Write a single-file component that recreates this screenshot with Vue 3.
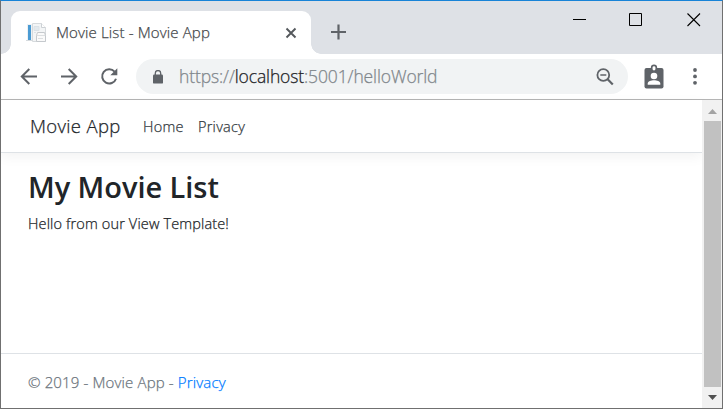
<script setup>
const nav = ['Home', 'Privacy']
</script>

<template>
  <div class="window">
    <header class="tabstrip">
      <div class="tab">
        <svg class="favicon" width="21" height="21" viewBox="0 0 21 21">
          <rect x="1" y="2" width="14" height="17" fill="#edf1f4" />
          <path d="M0 18.500h9" stroke="#d5dade" />
          <rect x="2" y="3" width="3" height="15" fill="#4a9bd3" />
          <path d="M6.500 1.500h9l4 4v14h-13z" fill="#f3f5f6" stroke="#d6dadd" />
          <path d="M15.500 1.500v4h4" fill="#fff" stroke="#ccd1d5" />
          <path d="M8 4.500h5v4H8zM8 10.500h2" fill="#e3e9ed" stroke="#dbe2e7" />
          <path d="M11.500 10.500h7l1 3v6h-9v-6z" fill="#fafafa" stroke="#c5c9cd" />
          <path d="M11 13.500h8M12 16.500h5" stroke="#dcdfe1" />
        </svg>
        <span class="tab-title">Movie List - Movie App</span>
        <svg class="tab-close" width="12" height="12" viewBox="0 0 12 12">
          <path d="M1.500 1.500l9 9M10.500 1.500l-9 9" stroke="#54585c" stroke-width="1.900" />
        </svg>
      </div>
      <svg class="plus" width="16" height="16" viewBox="0 0 16 16">
        <path d="M7.500 .5v15M0 8h15" stroke="#5f6368" stroke-width="2.200" />
      </svg>
      <div class="controls">
        <svg width="14" height="14" viewBox="0 0 14 14"><path d="M0 6.500h13" stroke="#000" /></svg>
        <svg class="maximize" width="14" height="14" viewBox="0 0 14 14"><path d="M.5.5h12v12H.5z" fill="none" stroke="#000" /></svg>
        <svg width="14" height="14" viewBox="0 0 14 14"><path d="M.5.5l12.500 12.500M13 .5L.5 13" stroke="#000" stroke-width="1.100" /></svg>
      </div>
    </header>

    <div class="toolbar">
      <svg class="nav-icon" width="18" height="18" viewBox="0 0 18 18">
        <path d="M17 8.500H2M9.300 1L1.800 8.500l7.500 7.500" />
      </svg>
      <svg class="nav-icon" width="18" height="18" viewBox="0 0 18 18">
        <path d="M1 8.500h15M8.700 1L16.200 8.500l-7.500 7.500" />
      </svg>
      <svg class="nav-icon" width="18" height="18" viewBox="0 0 18 18">
        <path d="M14.600 3.700A7.100 7.100 0 1 0 16 10.700" />
        <path d="M17.300.3v7h-7z" class="solid" />
      </svg>
      <div class="omnibox">
        <svg class="lock" width="10" height="14" viewBox="0 0 10 14">
          <rect y="4.600" width="10" height="9" rx="1.200" fill="#5f6368" />
          <path d="M2.300 5V3.200a2.700 2.700 0 0 1 5.400 0V5" fill="none" stroke="#5f6368" stroke-width="1.300" />
        </svg>
        <span class="url">https://<b>localhost</b>:5001/helloWorld</span>
        <svg class="zoom" width="18" height="18" viewBox="0 0 18 18" fill="none" stroke="#5f6368">
          <circle cx="7.300" cy="7" r="5.900" stroke-width="1.800" />
          <path d="M4.300 7h6" stroke-width="1.500" />
          <path d="M11.600 11.300l5.200 5.200" stroke-width="2.200" />
        </svg>
      </div>
      <svg class="badge" width="20" height="25" viewBox="0 0 20 25">
        <rect x=".5" y="4" width="19" height="20.500" rx="2" fill="#5f6368" />
        <rect x="7.700" y="1.300" width="4.600" height="6" rx="2.300" fill="#fff" stroke="#5f6368" stroke-width="1.700" />
        <circle cx="10" cy="12" r="3.300" fill="#fff" />
        <path d="M3.700 20.800v-1.300c0-2.200 3.500-3.200 6.300-3.200s6.300 1 6.300 3.200v1.300z" fill="#fff" />
      </svg>
      <svg class="dots" width="4" height="17" viewBox="0 0 4 17" fill="#5f6368">
        <circle cx="2" cy="2" r="1.900" /><circle cx="2" cy="8.400" r="1.900" /><circle cx="2" cy="14.800" r="1.900" />
      </svg>
    </div>

    <div class="viewport">
      <div class="page">
        <nav class="navbar">
          <a class="brand">Movie App</a>
          <a v-for="item in nav" :key="item" class="link">{{ item }}</a>
        </nav>
        <main>
          <h2>My Movie List</h2>
          <p>Hello from our View Template!</p>
        </main>
        <footer>© 2019 - Movie App - <a>Privacy</a></footer>
      </div>
      <div class="scrollbar">
        <svg width="9" height="5" viewBox="0 0 9 5"><path d="M4.500 0L9 5H0z" fill="#a3a3a3" /></svg>
        <div class="thumb"></div>
        <svg width="9" height="5" viewBox="0 0 9 5"><path d="M4.500 5L9 0H0z" fill="#505050" /></svg>
      </div>
    </div>
  </div>
</template>

<style>
body { margin: 0; background: #fff; }
</style>

<style scoped>
* { box-sizing: border-box; }
.window {
  width: 723px; height: 409px; display: flex; flex-direction: column;
  border: 1px solid #707070; border-top-color: #1883d7; background: #fff;
  font-family: "Open Sans", "Noto Sans", sans-serif; font-weight: 300; letter-spacing: .14px;
  -webkit-text-stroke: .25px currentColor; white-space: nowrap; overflow: hidden;
}
svg { flex: none; display: block; }
.tabstrip { height: 53px; flex: none; background: #dee1e6; display: flex; padding-left: 10px; }
.tab {
  width: 300px; height: 43px; margin-top: 10px; padding-left: 15px; background: #fff;
  border-radius: 9px 9px 0 0; display: flex; align-items: center; position: relative;
}
.tab::before, .tab::after { content: ""; position: absolute; bottom: 0; width: 10px; height: 10px; }
.tab::before { left: -10px; background: radial-gradient(circle at 0 0, #dee1e6 9.500px, #fff 10px); }
.tab::after { right: -10px; background: radial-gradient(circle at 100% 0, #dee1e6 9.500px, #fff 10px); }
.tab-title { width: 228px; margin: -2px 0 0 9px; font-size: 15px; color: #45484b; }
.tab-close { margin-left: 1px; }
.plus { margin: 23px 0 0 20px; }
.controls { display: flex; gap: 43px; margin: 12px 0 0 auto; padding-right: 21px; }
.maximize { margin: 0 1px 0 -1px; }
.toolbar { height: 45px; flex: none; display: flex; align-items: center; padding-left: 19px; }
.nav-icon { margin-right: 22px; fill: none; stroke: #5f6368; stroke-width: 2; }
.nav-icon .solid { fill: #5f6368; stroke: none; }
.omnibox {
  width: 492px; height: 35px; margin-left: -4px; padding: 0 14px 0 17px; border-radius: 18px;
  background: #f1f3f4; display: flex; align-items: center;
}
.url { margin: -2px 0 0 16px; font-size: 17.500px; letter-spacing: -.12px; color: #80868b; }
.url b { font-weight: 300; color: #202124; }
.zoom { margin-left: auto; }
.badge { margin-left: 16px; }
.dots { margin-left: 29px; }
.viewport { flex: 1; min-height: 0; display: flex; border-top: 1px solid #b5b5b5; }
.page { flex: 1; display: flex; flex-direction: column; color: #212529; font-size: 14.500px; }
.navbar {
  height: 53px; flex: none; display: flex; align-items: center; padding-left: 29px;
  border-bottom: 1px solid #dee2e6; box-shadow: 0 4px 12px rgba(0, 0, 0, .05);
}
.brand { width: 113px; margin-top: -2px; font-size: 18.500px; letter-spacing: .33px; }
.link { width: 55px; color: #343a40; letter-spacing: .25px; }
main { flex: 1; padding: 15px 0 0 27px; }
h2 { margin: 0; font-size: 29px; line-height: 38px; font-weight: 600; letter-spacing: -.05px; -webkit-text-stroke: 0; }
p { margin: 7px 0 0; line-height: 22px; }
footer { height: 55px; flex: none; padding-left: 27px; font-size: 15px; line-height: 56px; border-top: 1px solid #dee2e6; color: #6c757d; }
footer a { color: #007bff; }
.scrollbar {
  width: 20px; background: #f1f1f1; display: flex; flex-direction: column; align-items: center;
  padding: 9px 0 8px;
}
.thumb { width: 17px; flex: 1; margin: 7px 0 8px 1px; background: #c1c1c1; }
</style>
